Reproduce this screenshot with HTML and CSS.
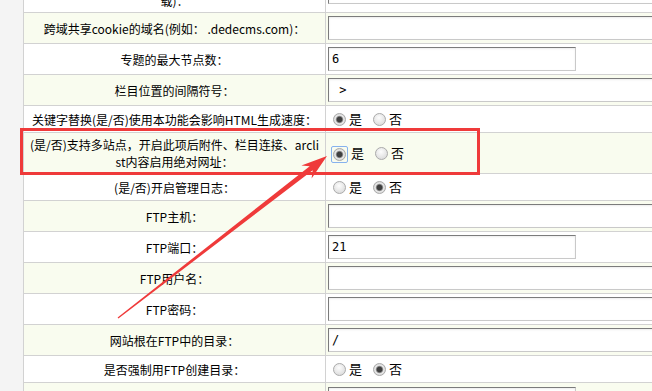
FILE: index.html
```html
<!DOCTYPE html>
<html lang="zh-CN">
<head>
    <meta charset="UTF-8">
    <meta name="viewport" content="width=device-width, initial-scale=1.0">
    <title>系统基本参数</title>
    <link rel="stylesheet" href="styles.css">
</head>
<body>
    <div class="page">
        <table class="config">
            <tr class="row">
                <td class="label">远程图片自动本地化(即自动下<br>载)：</td>
                <td class="value"><input type="text" class="field field-long" value=""></td>
            </tr>
            <tr class="row alt">
                <td class="label">跨域共享cookie的域名(例如： .dedecms.com)：</td>
                <td class="value"><input type="text" class="field field-long" value=""></td>
            </tr>
            <tr class="row">
                <td class="label">专题的最大节点数：</td>
                <td class="value"><input type="text" class="field" value="6"></td>
            </tr>
            <tr class="row alt">
                <td class="label">栏目位置的间隔符号：</td>
                <td class="value"><input type="text" class="field field-long" value=" >"></td>
            </tr>
            <tr class="row">
                <td class="label">关键字替换(是/否)使用本功能会影响HTML生成速度：</td>
                <td class="value choice">
                    <label><input type="radio" class="radio" name="keyword" checked>是</label>
                    <label><input type="radio" class="radio" name="keyword">否</label>
                </td>
            </tr>
            <tr class="row alt">
                <td class="label">(是/否)支持多站点，开启此项后附件、栏目连接、arcli<br>st内容启用绝对网址：</td>
                <td class="value choice">
                    <label><span class="focus-ring"><input type="radio" class="radio" name="multisite" checked></span>是</label>
                    <label><input type="radio" class="radio" name="multisite">否</label>
                </td>
            </tr>
            <tr class="row">
                <td class="label">(是/否)开启管理日志：</td>
                <td class="value choice">
                    <label><input type="radio" class="radio" name="log">是</label>
                    <label><input type="radio" class="radio" name="log" checked>否</label>
                </td>
            </tr>
            <tr class="row alt">
                <td class="label">FTP主机：</td>
                <td class="value"><input type="text" class="field field-long" value=""></td>
            </tr>
            <tr class="row">
                <td class="label">FTP端口：</td>
                <td class="value"><input type="text" class="field" value="21"></td>
            </tr>
            <tr class="row alt">
                <td class="label">FTP用户名：</td>
                <td class="value"><input type="text" class="field field-long" value=""></td>
            </tr>
            <tr class="row">
                <td class="label">FTP密码：</td>
                <td class="value"><input type="text" class="field field-long" value=""></td>
            </tr>
            <tr class="row alt">
                <td class="label">网站根在FTP中的目录：</td>
                <td class="value"><input type="text" class="field field-long" value="/"></td>
            </tr>
            <tr class="row">
                <td class="label">是否强制用FTP创建目录：</td>
                <td class="value choice">
                    <label><input type="radio" class="radio" name="ftpdir">是</label>
                    <label><input type="radio" class="radio" name="ftpdir" checked>否</label>
                </td>
            </tr>
            <tr class="row alt">
                <td class="label label-low">附件上传的图片最大宽度：</td>
                <td class="value"><input type="text" class="field" value="800"></td>
            </tr>
        </table>

        <!-- screenshot annotation -->
        <div class="mark-box"></div>
        <svg class="mark-arrow" width="652" height="391" viewBox="0 0 652 391">
            <polygon points="117.6,317.4 309.7,166.3 301.4,165.4 327,156 311.6,178.4 312.7,170.3 118.4,318.6" fill="#ef3a3a"/>
        </svg>
    </div>
</body>
</html>
```

FILE: styles.css
```css
body {
    margin: 0;
    background-color: #f4f4f4;
    font-family: "Noto Sans CJK SC", "DejaVu Sans", sans-serif;
    font-size: 12px;
    color: #000;
    overflow: hidden;
}

.page {
    position: relative;
    height: 391px;
    overflow: hidden;
    padding-left: 23px;
}

.config {
    margin-top: -29px;
    width: 900px;
    table-layout: fixed;
    border-collapse: collapse;
    background-color: #fff;
}

.row td {
    border: 1px solid #d2d2d2;
    padding: 3px 2px;
}

.row.alt {
    background-color: #f9fcef;
}

.label {
    width: 297px;
    text-align: center;
    line-height: 17px;
    white-space: nowrap;
}

.row .label-low {
    padding-top: 12px;
}

.value {
    padding-left: 3px;
    vertical-align: middle;
}

.field {
    box-sizing: border-box;
    display: block;
    width: 248px;
    height: 24px;
    margin: 0;
    padding: 0 3px;
    border: 1px solid;
    border-color: #7b7b7b #c9c9c9 #c9c9c9 #7b7b7b;
    box-shadow: inset 0 1px 2px rgba(0, 0, 0, 0.08);
    font-family: "DejaVu Sans Mono", "Noto Sans CJK SC", monospace;
    font-size: 12px;
    color: #000;
    background: #fff;
}

.field-long {
    width: 420px;
}

.choice {
    line-height: 20px;
    height: 20px;
    font-size: 13px;
}

.choice label {
    margin-right: 3px;
}

.radio {
    appearance: none;
    -webkit-appearance: none;
    box-sizing: border-box;
    width: 13px;
    height: 13px;
    margin: 0 3px 0 5px;
    border: 1px solid #ababab;
    border-radius: 50%;
    background: radial-gradient(circle at 45% 35%, #fdfdfd, #dedede 75%);
    vertical-align: -2px;
}

.radio:checked {
    background: radial-gradient(circle, #3f3f3f 0 2.4px, #8a8a8a 3.2px, #e9e9e9 4.2px, #d4d4d4 6px);
}

.focus-ring {
    display: inline-block;
    margin-left: 3px;
    margin-right: 3px;
    padding: 1px;
    border: 1px solid #86b2ee;
    border-radius: 2px;
    line-height: 0;
    vertical-align: -3px;
}

.focus-ring .radio {
    margin: 0;
    vertical-align: 0;
}

.mark-box {
    position: absolute;
    left: 20px;
    top: 128px;
    width: 454px;
    height: 41px;
    border: 3px solid #ef3a3a;
}

.mark-arrow {
    position: absolute;
    left: 0;
    top: 0;
    pointer-events: none;
}
```
